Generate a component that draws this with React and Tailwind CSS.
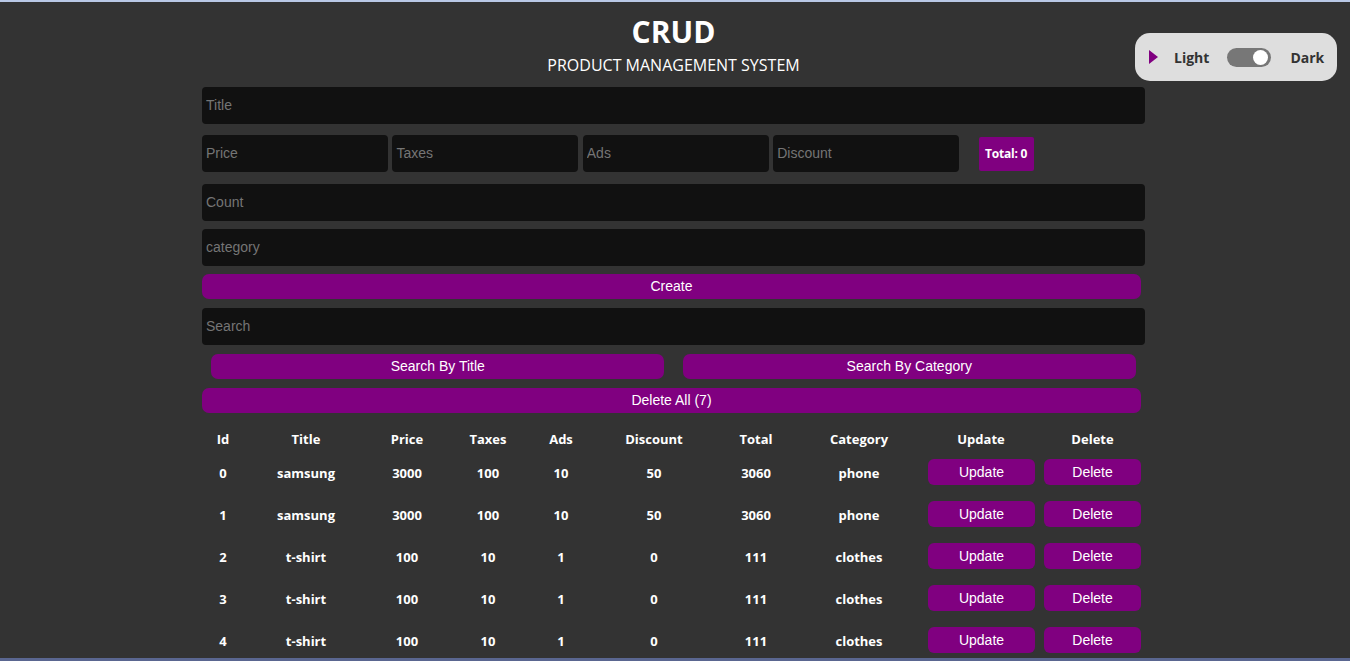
import { useState } from 'react'

const products = [
  { id: 0, title: 'samsung', price: 3000, taxes: 100, ads: 10, discount: 50, total: 3060, category: 'phone' },
  { id: 1, title: 'samsung', price: 3000, taxes: 100, ads: 10, discount: 50, total: 3060, category: 'phone' },
  { id: 2, title: 't-shirt', price: 100, taxes: 10, ads: 1, discount: 0, total: 111, category: 'clothes' },
  { id: 3, title: 't-shirt', price: 100, taxes: 10, ads: 1, discount: 0, total: 111, category: 'clothes' },
  { id: 4, title: 't-shirt', price: 100, taxes: 10, ads: 1, discount: 0, total: 111, category: 'clothes' },
]

const inputCls =
  'h-[37px] bg-[#111111] rounded-[4px] px-[4px] pb-[1px] text-[14px] text-white placeholder:text-[#757575] outline-none font-["Liberation_Sans",Arial,sans-serif]'

const btnCls =
  'h-[25px] bg-[#800080] rounded-[7px] text-[14px] text-white font-["Liberation_Sans",Arial,sans-serif]'

const rowBtn =
  'block w-full h-[26px] mb-[4px] bg-[#800080] rounded-[6px] text-[14px] font-normal font-["Liberation_Sans",Arial,sans-serif]'

function ThemeToggle() {
  const [dark, setDark] = useState(true)
  return (
    <div className="absolute top-[33px] left-[1135px] w-[202px] h-[48px] bg-[#dedede] rounded-[15px] flex items-center pl-[14px] font-['Open_Sans',sans-serif] font-bold text-[14px] text-[#333]">
      <svg width="9" height="14" viewBox="0 0 9 14" className="mr-[16px]">
        <path d="M0 0 L9 7 L0 14 Z" fill="#800080" />
      </svg>
      <span>Light</span>
      <button
        onClick={() => setDark(!dark)}
        className="ml-[18px] w-[44px] h-[19px] rounded-full bg-[#777] flex items-center px-[3px] justify-end"
      >
        <span className="w-[15px] h-[15px] rounded-full bg-white" />
      </button>
      <span className="ml-[19px]">Dark</span>
    </div>
  )
}

export default function App() {
  const cols = [
    ['Id', 'w-[42px]'],
    ['Title', 'w-[124px]'],
    ['Price', 'w-[78px]'],
    ['Taxes', 'w-[84px]'],
    ['Ads', 'w-[62px]'],
    ['Discount', 'w-[124px]'],
    ['Total', 'w-[80px]'],
    ['Category', 'w-[126px]'],
    ['Update', 'w-[118px]'],
    ['Delete', 'w-[105px]'],
  ]

  return (
    <div className="relative min-h-[661px] h-[661px] overflow-hidden bg-[#333333] text-white">
      <div className="h-[2px] bg-[#b9c8e6]" />
      <ThemeToggle />

      <div className="w-[943px] ml-[202px] flex flex-col">
        <h1 className="mt-[12px] text-center text-[30px] leading-[36px] font-bold font-['Open_Sans',sans-serif]">
          CRUD
        </h1>
        <h2 className="mt-[5px] text-center text-[16px] leading-[20px] font-['Open_Sans',sans-serif]">
          PRODUCT MANAGEMENT SYSTEM
        </h2>

        <input className={`${inputCls} mt-[12px] w-full`} placeholder="Title" />

        <div className="mt-[11px] flex items-center gap-[4.4px]">
          <input className={`${inputCls} w-[186px]`} placeholder="Price" />
          <input className={`${inputCls} w-[186px]`} placeholder="Taxes" />
          <input className={`${inputCls} w-[186px]`} placeholder="Ads" />
          <input className={`${inputCls} w-[186px]`} placeholder="Discount" />
          <div className="ml-[15px] w-[55px] h-[34px] rounded-[2px] bg-[#800080] flex items-center justify-center text-[12px] font-bold font-['Open_Sans',sans-serif] tracking-[-0.2px]">
            Total: 0
          </div>
        </div>

        <input className={`${inputCls} mt-[12px] w-full`} placeholder="Count" />
        <input className={`${inputCls} mt-[8px] w-full`} placeholder="category" />

        <button className={`${btnCls} mt-[8px] w-[939px]`}>Create</button>

        <input className={`${inputCls} mt-[9px] w-full`} placeholder="Search" />

        <div className="mt-[9px] flex justify-around">
          <button className={`${btnCls} w-[48%]`}>Search By Title</button>
          <button className={`${btnCls} w-[48%]`}>Search By Category</button>
        </div>

        <button className={`${btnCls} mt-[9px] w-[939px]`}>Delete All (7)</button>

        <table className="mt-[14px] table-fixed w-full text-center font-['Open_Sans',sans-serif] text-[13px] font-bold">
          <thead>
            <tr className="h-[26px]">
              {cols.map(([c, w]) => (
                <th key={c} className={`${w} font-bold`}>{c}</th>
              ))}
            </tr>
          </thead>
          <tbody>
            {products.map((p) => (
              <tr key={p.id} className="h-[42px]">
                <td>{p.id}</td>
                <td>{p.title}</td>
                <td>{p.price}</td>
                <td>{p.taxes}</td>
                <td>{p.ads}</td>
                <td>{p.discount}</td>
                <td>{p.total}</td>
                <td>{p.category}</td>
                <td className="pl-[6px] pr-[5px]">
                  <button className={rowBtn}>Update</button>
                </td>
                <td className="pl-[4px] pr-[4px]">
                  <button className={rowBtn}>Delete</button>
                </td>
              </tr>
            ))}
          </tbody>
        </table>
      </div>

      <div className="absolute left-0 right-0 bottom-0 h-[3px] bg-[#5a6690]" />
    </div>
  )
}
